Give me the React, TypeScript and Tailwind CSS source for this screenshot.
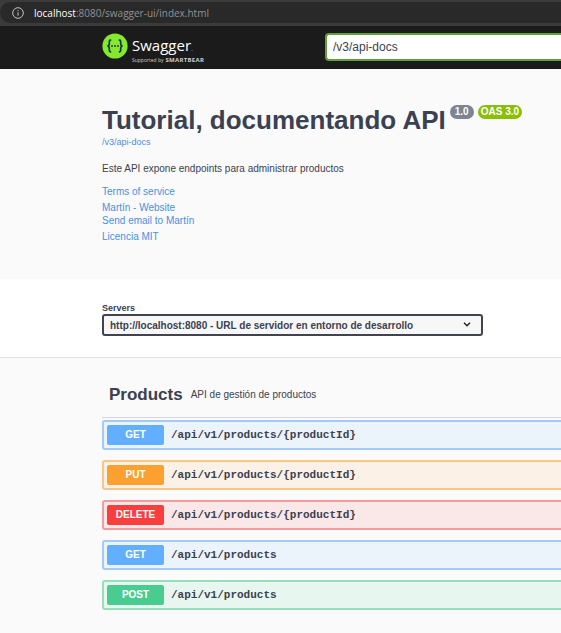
import { useState } from "react";

const tones = {
  GET: { row: "border-[#a3cbfa] bg-[#ebf3fb]", badge: "bg-[#61affe]" },
  PUT: { row: "border-[#fac585] bg-[#fbf1e6]", badge: "bg-[#fca130]" },
  DELETE: { row: "border-[#f59b9d] bg-[#fae7e7]", badge: "bg-[#f93e3e]" },
  POST: { row: "border-[#96dfbd] bg-[#e8f6f0]", badge: "bg-[#49cc90]" },
};

type Method = keyof typeof tones;

const operations: { method: Method; path: string }[] = [
  { method: "GET", path: "/api/v1/products/{productId}" },
  { method: "PUT", path: "/api/v1/products/{productId}" },
  { method: "DELETE", path: "/api/v1/products/{productId}" },
  { method: "GET", path: "/api/v1/products" },
  { method: "POST", path: "/api/v1/products" },
];

function AddressBar() {
  return (
    <div className="h-[26px] bg-[#3b3b3b] pt-0.5 pb-[3px]">
      <div className="flex h-full items-center gap-2.5 rounded-l-full bg-[#292929] pl-3 font-['Open_Sans',sans-serif] text-[10px] leading-4 text-[#929292]">
        <svg viewBox="0 0 12 12" className="size-3" fill="none" stroke="#c4c4c4" aria-hidden="true">
          <circle cx="6" cy="6" r="5.3" />
          <path d="M6 5.3v3.4M6 3.2v1.1" />
        </svg>
        <p>
          <span className="text-white">localhost</span>:8080/swagger-ui/index.html
        </p>
      </div>
    </div>
  );
}

function Logo() {
  return (
    <a href="#top" aria-label="Swagger" className="flex items-start gap-1 font-['Open_Sans',sans-serif] text-white">
      <svg viewBox="0 0 26 26" className="size-[26px]" fill="none" aria-hidden="true">
        <circle cx="13" cy="13" r="12.6" fill="#85ea2d" />
        <g stroke="#173647" strokeWidth="1.7">
          <path d="M9.2 7.2H8.6Q7.3 7.2 7.3 8.7V10.8Q7.3 12.8 5.4 13Q7.3 13.2 7.3 15.2V17.3Q7.3 18.8 8.6 18.8H9.2" />
          <path d="M16.8 7.2H17.4Q18.7 7.2 18.7 8.7V10.8Q18.7 12.8 20.6 13Q18.7 13.2 18.7 15.2V17.3Q18.7 18.8 17.4 18.8H16.8" />
        </g>
        <g fill="#173647">
          <circle cx="10" cy="13" r="0.9" />
          <circle cx="13" cy="13" r="0.9" />
          <circle cx="16" cy="13" r="0.9" />
        </g>
      </svg>
      <span className="flex flex-col pt-1">
        <span className="text-[15px] leading-4">
          Swagger<span className="text-[8px] text-[#8a8a8a]">.</span>
        </span>
        <span className="flex items-baseline gap-0.5 text-[5px] leading-[8px] whitespace-nowrap text-[#d0d0d0]">
          Supported by <b className="text-[6px] tracking-wider">SMARTBEAR</b>
        </span>
      </span>
    </a>
  );
}

export default function App() {
  const [url, setUrl] = useState("/v3/api-docs");
  return (
    <div id="top" className="min-h-screen overflow-x-hidden bg-[#fafafa] font-['Liberation_Sans',Arial,sans-serif] text-[#3b4151]">
      <AddressBar />
      <header className="flex h-[43px] items-start justify-between bg-[#1b1b1b] pt-[7px] pl-[102px]">
        <Logo />
        <input
          aria-label="API definition"
          value={url}
          onChange={(e) => setUrl(e.target.value)}
          className="h-7 w-[236px] rounded-l-sm border-2 border-r-0 border-[#62a03f] bg-white px-1.5 text-xs text-[#3b4151] outline-none"
        />
      </header>

      <main>
        <section className="h-[210px] pt-[35px] pl-[102px]">
          <div className="flex items-start gap-1">
            <h1 className="text-[26px] leading-8 font-bold whitespace-nowrap">Tutorial, documentando API</h1>
            <span className="mt-px rounded-full bg-[#7d8492] px-[5px] text-[10px] leading-[14px] font-bold text-white">1.0</span>
            <span className="mt-px rounded-full bg-[#89bf04] px-[3px] text-[10px] leading-[14px] font-bold whitespace-nowrap text-white">OAS 3.0</span>
          </div>
          <a href="#docs" className="block text-[9px] leading-3 text-[#4990e2]">/v3/api-docs</a>
          <p className="mt-[13px] text-[10px] leading-4">Este API expone endpoints para administrar productos</p>
          <div className="mt-2 flex flex-col items-start text-[10px] leading-[13px] text-[#4990e2]">
            <a href="#terms">Terms of service</a>
            <a href="#website" className="mt-[3px]">Martín - Website</a>
            <a href="#email">Send email to Martín</a>
            <a href="#license" className="mt-[3px]">Licencia MIT</a>
          </div>
        </section>

        <section className="h-[79px] border-b border-[#e2e2e2] bg-white pt-[23px] pl-[102px]">
          <label htmlFor="server" className="block text-[9px] leading-3 font-bold">Servers</label>
          <div className="relative w-[381px]">
            <select
              id="server"
              className="block h-[22px] w-full appearance-none rounded-[3px] border-2 border-[#41444e] bg-[#f7f7f7] px-1.5 text-[10px] font-bold"
            >
              <option>http://localhost:8080 - URL de servidor en entorno de desarrollo</option>
            </select>
            <svg viewBox="0 0 8 5" className="pointer-events-none absolute top-2 right-3 h-[5px] w-2" fill="none" stroke="#222" strokeWidth="1.4" aria-hidden="true">
              <path d="M1 .8 4 3.8 7 .8" />
            </svg>
          </div>
        </section>

        <section id="docs" className="pt-[23px] pb-6 pl-[102px]">
          <div className="flex h-[37px] items-start gap-2 border-b border-[#d5d6d9] pt-0.5 pl-[7px]">
            <h2 className="text-[17px] leading-6 font-bold">Products</h2>
            <p className="text-[10px] leading-6">API de gestión de productos</p>
          </div>
          <ul className="mt-0.5 flex flex-col gap-2.5">
            {operations.map(({ method, path }) => (
              <li key={method + path}>
                <button type="button" className={`flex h-[30px] w-full items-center gap-[7px] rounded-l-[3px] border-2 border-r-0 pl-[3px] text-left ${tones[method].row}`}>
                  <span className={`w-[57px] rounded-xs text-center text-[10px] leading-5 font-bold text-white ${tones[method].badge}`}>{method}</span>
                  <span className="font-['Liberation_Mono',monospace] text-[11px] leading-4 font-bold">{path}</span>
                </button>
              </li>
            ))}
          </ul>
        </section>
      </main>
    </div>
  );
}
